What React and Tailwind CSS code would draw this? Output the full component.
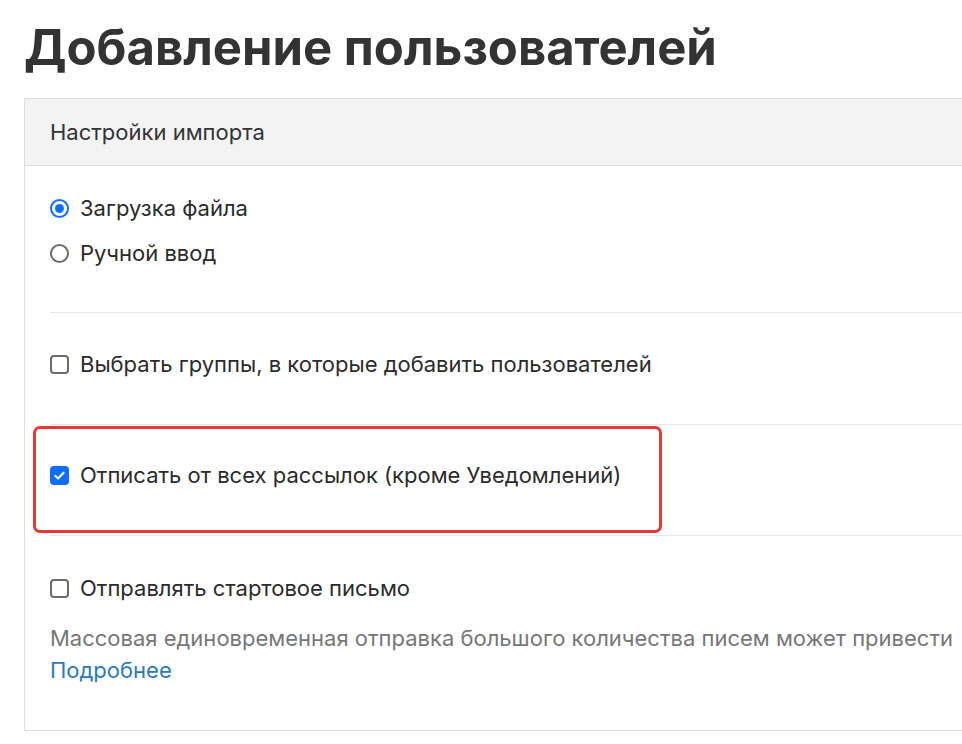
import { useState } from "react";

function Radio({ checked, label, onChange }) {
  return (
    <label className="flex items-center gap-[11px] cursor-pointer leading-[27px]">
      <span
        className={`w-[19px] h-[19px] rounded-full flex items-center justify-center shrink-0 ${
          checked ? "border-[2px] border-[#0d6efd]" : "border-[2px] border-[#6b6b6b]"
        }`}
        onClick={onChange}
      >
        {checked && <span className="w-[9px] h-[9px] rounded-full bg-[#0d6efd]" />}
      </span>
      <span>{label}</span>
    </label>
  );
}

function Checkbox({ checked, label, onChange }) {
  return (
    <label className="flex items-center gap-[11px] cursor-pointer leading-[27px]">
      <span
        onClick={onChange}
        className={`w-[19px] h-[19px] rounded-[4px] flex items-center justify-center shrink-0 ${
          checked ? "bg-[#0d6efd]" : "border-[2px] border-[#6b6b6b]"
        }`}
      >
        {checked && (
          <svg width="13" height="13" viewBox="0 0 16 16" fill="none">
            <path d="M3 8.5l3.2 3.2L13 4.5" stroke="#fff" strokeWidth="2.6" strokeLinecap="round" strokeLinejoin="round" />
          </svg>
        )}
      </span>
      <span>{label}</span>
    </label>
  );
}

export default function App() {
  const [mode, setMode] = useState("file");
  const [groups, setGroups] = useState(false);
  const [unsub, setUnsub] = useState(true);
  const [start, setStart] = useState(false);

  return (
    <div
      className="w-[962px] h-[744px] overflow-hidden bg-white text-[#2b2b2b]"
      style={{ fontFamily: "Inter, 'Noto Sans', sans-serif" }}
    >
      <h1 className="pl-[24px] pt-[19px] h-[98px] text-[49px] font-bold leading-[58px] text-[#333]">
        Добавление пользователей
      </h1>

      <div className="ml-[24px] w-[1100px] border border-[#dedede] text-[22px]">
        <div className="h-[67px] bg-[#f3f3f3] border-b border-[#dedede] flex items-center pl-[25px] text-[22px] text-[#333]">
          Настройки импорта
        </div>

        <div className="pl-[25px]">
          <div className="pt-[29px] pb-[45px] flex flex-col gap-[18px]">
            <Radio checked={mode === "file"} label="Загрузка файла" onChange={() => setMode("file")} />
            <Radio checked={mode === "manual"} label="Ручной ввод" onChange={() => setMode("manual")} />
          </div>

          <div className="border-t border-[#e6e6e6] h-[112px] flex items-center pb-[8px]">
            <Checkbox checked={groups} label="Выбрать группы, в которые добавить пользователей" onChange={() => setGroups(!groups)} />
          </div>

          <div className="border-t border-[#e6e6e6] h-[111px] flex items-center pb-[9px] relative">
            <Checkbox checked={unsub} label="Отписать от всех рассылок (кроме Уведомлений)" onChange={() => setUnsub(!unsub)} />
            <div className="absolute left-[-17px] top-[1px] w-[629px] h-[107px] border-[3px] border-[#e53935] rounded-[7px] pointer-events-none" />
          </div>

          <div className="border-t border-[#e6e6e6] pt-[39px] pb-[43px]">
            <Checkbox checked={start} label="Отправлять стартовое письмо" onChange={() => setStart(!start)} />
            <p className="mt-[20px] text-[22px] leading-[32px] text-[#777] whitespace-nowrap">
              Массовая единовременная отправка большого количества писем может привести
            </p>
            <a href="#" className="text-[22px] leading-[32px] text-[#2a7ac0]">
              Подробнее
            </a>
          </div>
        </div>
      </div>
    </div>
  );
}
